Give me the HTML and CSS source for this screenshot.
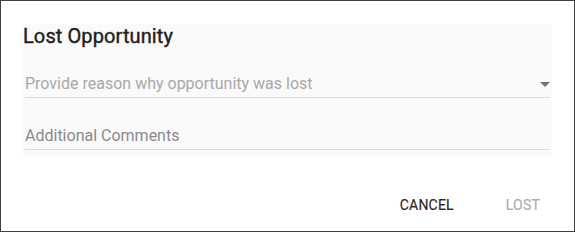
FILE: index.html
```html
<!DOCTYPE html>
<html>
<head>
    <link rel="stylesheet" href="styles.css">
</head>
<body>
    <div class="dialog">
        <div class="panel">
            <h2 class="title">Lost Opportunity</h2>
            <div class="field select-field">
                <span class="placeholder">Provide reason why opportunity was lost</span>
                <svg class="arrow" width="10" height="5" viewBox="0 0 10 5"><path d="M0 0l5 5 5-5z" fill="#757575"/></svg>
            </div>
            <div class="field comments-field">
                <span class="label">Additional Comments</span>
            </div>
        </div>
        <div class="actions">
            <button class="btn">CANCEL</button>
            <button class="btn disabled">LOST</button>
        </div>
    </div>
</body>
</html>
```

FILE: styles.css
```css
body {
    margin: 0;
    font-family: Roboto, "Noto Sans", sans-serif;
    background: white;
}
.dialog {
    width: 575px;
    height: 232px;
    box-sizing: border-box;
    border: 1px solid #404040;
    background: white;
}
.panel {
    margin: 23px 0 0 22px;
    width: 529px;
    height: 132px;
    background: #fafafa;
    padding: 0 2px 0 0;
    box-sizing: border-box;
}
.title {
    margin: 0;
    font-size: 20px;
    line-height: 24px;
    font-weight: 400;
    letter-spacing: 0.1px;
    -webkit-text-stroke: 0.4px #1e1e1e;
    color: #1e1e1e;
}
.field {
    display: flex;
    align-items: center;
    margin-left: 2px;
    padding-bottom: 3px;
    border-bottom: 1px solid #dcdcdc;
    font-size: 16px;
    line-height: 20px;
}
.select-field {
    margin-top: 26px;
}
.comments-field {
    margin-top: 28px;
}
.placeholder {
    flex-grow: 1;
    color: #a8a8a8;
}
.label {
    color: #8a8a8a;
}
.actions {
    display: flex;
    justify-content: flex-end;
    gap: 36px;
    margin-top: 31px;
    padding-right: 26px;
}
.btn {
    font-family: Roboto, "Noto Sans", sans-serif;
    font-size: 14px;
    font-weight: 400;
    line-height: 24px;
    letter-spacing: 0.2px;
    -webkit-text-stroke: 0.15px currentColor;
    padding: 6px 8px;
    background: none;
    border: none;
    color: #262626;
    cursor: pointer;
}
.disabled {
    color: #ababab;
}
```
